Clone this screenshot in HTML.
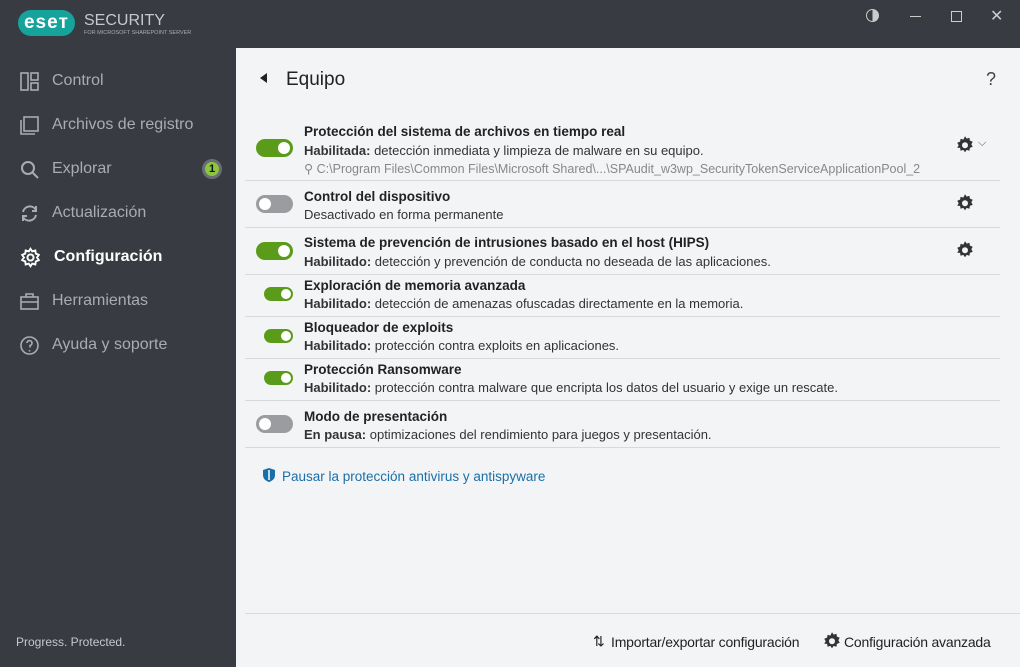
<!DOCTYPE html>
<html><head><meta charset="utf-8"><style>
*{margin:0;padding:0;box-sizing:border-box}
body{width:1020px;height:667px;overflow:hidden;background:#383b41;font-family:"Liberation Sans",sans-serif;position:relative}
.abs{position:absolute}
.side{left:0;top:48px;width:236px;height:619px;background:#383b41}
.nav{position:absolute;left:20px;height:24px;display:flex;align-items:center;color:#a9adb3;font-size:16px}
.nav svg{margin-right:13px}
.main{left:236px;top:48px;width:784px;height:619px;background:#f3f4f6}
.row{position:absolute;left:9px;width:755px;border-bottom:1px solid #d7d9dc}
.t{position:absolute;left:59px;font-size:13.5px;font-weight:bold;color:#222}
.d{position:absolute;left:59px;font-size:13px;color:#333;white-space:nowrap}
.d b{font-weight:bold}
.tg{position:absolute;border-radius:10px}
.tg::after{content:"";position:absolute;background:#fff;border-radius:50%}
.on{background:#5a9c1a}.off{background:#9a9c9f}
.big{left:11px;width:37px;height:18px}
.big::after{width:12px;height:12px;top:3px}
.big.on::after{left:22px}.big.off::after{left:3px}
.sm{left:19px;width:29px;height:14px}
.sm::after{width:10px;height:10px;top:2px;left:17px}
.g{position:absolute;left:710px}
</style></head><body>
<svg width="0" height="0" style="position:absolute"><defs><g id="gear"><path d="M12 1.5l2 2.8 3.3-1 .6 3.4 3.4 1.4-1.7 3 1.7 3-3.4 1.4-.6 3.4-3.3-1-2 2.8-2-2.8-3.3 1-.6-3.4L2.7 15.3l1.7-3-1.7-3 3.4-1.4.6-3.4 3.3 1z" fill="#333"/><circle cx="12" cy="12.3" r="3.6" fill="#f3f4f6"/></g></defs></svg>
<div class="abs" style="left:18px;top:10px;width:57px;height:26px;background:#16a39b;border-radius:13px;color:#fff;font-weight:bold;font-size:19px;line-height:26px;text-align:center;letter-spacing:1px">eseт</div>
<div class="abs" style="left:84px;top:12px;color:#c5c8cc;font-size:16px">SECURITY</div>
<div class="abs" style="left:84px;top:30px;color:#a9adb3;font-size:5.5px">FOR MICROSOFT SHAREPOINT SERVER</div>
<div class="abs" style="left:866px;top:9px;width:13px;height:13px;border:1.5px solid #ccc;border-radius:50%;background:linear-gradient(90deg,transparent 50%,#ccc 50%)"></div>
<div class="abs" style="left:910px;top:16px;width:11px;height:1px;background:#ccc"></div>
<div class="abs" style="left:951px;top:11px;width:11px;height:11px;border:1px solid #ccc"></div>
<div class="abs" style="left:990px;top:6px;color:#ccc;font-size:16px">✕</div>
<div class="abs side">
 <div class="nav" style="top:21px"><svg width="19" height="19" fill="none" stroke="#a9adb3" stroke-width="1.6"><rect x="1" y="1" width="7" height="17"/><rect x="11" y="1" width="7" height="7"/><rect x="11" y="11" width="7" height="7"/></svg>Control</div>
 <div class="nav" style="top:65px"><svg width="19" height="19" fill="none" stroke="#a9adb3" stroke-width="1.6"><rect x="4" y="1" width="14" height="14"/><path d="M1 4v14h14"/></svg>Archivos de registro</div>
 <div class="nav" style="top:109px"><svg width="19" height="19" fill="none" stroke="#a9adb3" stroke-width="2"><circle cx="8" cy="8" r="6"/><path d="M12.5 12.5L18 18"/></svg>Explorar</div>
 <div class="abs" style="left:202px;top:111px;width:20px;height:20px;border-radius:50%;background:#8cc63f;border:3px solid #6a6d72;font-size:11px;font-weight:bold;text-align:center;line-height:14px;color:#111">1</div>
 <div class="nav" style="top:153px"><svg width="19" height="19" fill="none" stroke="#a9adb3" stroke-width="2"><path d="M3 8a7 7 0 0 1 13-2M16 11a7 7 0 0 1-13 2"/><path d="M16 2v5h-4M3 17v-5h4"/></svg>Actualización</div>
 <div class="nav" style="top:197px;color:#fff;font-weight:bold"><svg width="21" height="21" viewBox="0 0 24 24" fill="none" stroke="#fff" stroke-width="2.2"><circle cx="12" cy="12" r="3.5"/><path d="M12 2l2 3 3.5-1 .5 3.5 3.5 1.5-2 3 2 3-3.5 1.5-.5 3.5-3.5-1-2 3-2-3-3.5 1-.5-3.5L2.5 15l2-3-2-3L6 7.5 6.5 4 10 5z"/></svg>Configuración</div>
 <div class="nav" style="top:241px"><svg width="19" height="19" fill="none" stroke="#a9adb3" stroke-width="1.6"><rect x="1" y="5" width="17" height="12"/><path d="M6 5V2h7v3M1 10h17"/></svg>Herramientas</div>
 <div class="nav" style="top:285px"><svg width="19" height="19" fill="none" stroke="#a9adb3" stroke-width="1.6"><circle cx="9.5" cy="9.5" r="8.5"/><path d="M7 7a2.5 2.5 0 1 1 3 2.5v2M9.5 14v1.5"/></svg>Ayuda y soporte</div>
 <div class="abs" style="left:16px;top:587px;color:#c5c8cc;font-size:12px">Progress. Protected.</div>
</div>
<div class="abs main">
 <div class="abs" style="left:24px;top:25px;width:0;height:0;border-top:5px solid transparent;border-bottom:5px solid transparent;border-right:7px solid #222"></div>
 <div class="abs" style="left:50px;top:21px;font-size:19px;color:#222">Equipo</div>
 <div class="abs" style="left:750px;top:21px;font-size:18px;color:#444">?</div>
 <div class="row" style="top:68px;height:65px"><div class="tg big on" style="top:23px"></div>
  <div class="t" style="top:8px">Protección del sistema de archivos en tiempo real</div>
  <div class="d" style="top:27px"><b>Habilitada:</b> detección inmediata y limpieza de malware en su equipo.</div>
  <div class="d" style="top:45px;color:#888;font-size:12.5px">⚲ C:\Program Files\Common Files\Microsoft Shared\...\SPAudit_w3wp_SecurityTokenServiceApplicationPool_2</div>
  <svg class="g" style="top:19px" width="20" height="20" viewBox="0 0 24 24"><use href="#gear"/></svg><div class="abs" style="left:733px;top:21px;font-size:11px;color:#555">⌵</div></div>
 <div class="row" style="top:133px;height:47px">
  <div class="tg big off" style="top:14px"></div>
  <div class="t" style="top:8px">Control del dispositivo</div>
  <div class="d" style="top:26px">Desactivado en forma permanente</div>
  <svg class="g" style="top:12px" width="20" height="20" viewBox="0 0 24 24"><use href="#gear"/></svg></div>
 <div class="row" style="top:180px;height:47px"><div class="tg big on" style="top:14px"></div>
  <div class="t" style="top:7px">Sistema de prevención de intrusiones basado en el host (HIPS)</div>
  <div class="d" style="top:26px"><b>Habilitado:</b> detección y prevención de conducta no deseada de las aplicaciones.</div>
  <svg class="g" style="top:12px" width="20" height="20" viewBox="0 0 24 24"><use href="#gear"/></svg></div>
 <div class="row" style="top:227px;height:42px"><div class="tg sm on" style="top:12px"></div>
  <div class="t" style="top:3px">Exploración de memoria avanzada</div>
  <div class="d" style="top:21px"><b>Habilitado:</b> detección de amenazas ofuscadas directamente en la memoria.</div></div>
 <div class="row" style="top:269px;height:42px"><div class="tg sm on" style="top:12px"></div>
  <div class="t" style="top:3px">Bloqueador de exploits</div>
  <div class="d" style="top:21px"><b>Habilitado:</b> protección contra exploits en aplicaciones.</div></div>
 <div class="row" style="top:311px;height:42px"><div class="tg sm on" style="top:12px"></div>
  <div class="t" style="top:3px">Protección Ransomware</div>
  <div class="d" style="top:21px"><b>Habilitado:</b> protección contra malware que encripta los datos del usuario y exige un rescate.</div></div>
 <div class="row" style="top:353px;height:47px"><div class="tg big off" style="top:14px"></div>
  <div class="t" style="top:8px">Modo de presentación</div>
  <div class="d" style="top:26px"><b>En pausa:</b> optimizaciones del rendimiento para juegos y presentación.</div></div>
 <svg class="abs" style="left:27px;top:420px" width="12" height="14"><path d="M6 0L12 2v5c0 4-3 6-6 7-3-1-6-3-6-7V2z" fill="#1a6fa8"/><path d="M6 2v10" stroke="#fff" stroke-width="1.5"/></svg>
 <div class="abs" style="left:46px;top:421px;font-size:13.5px;color:#1a6fa8">Pausar la protección antivirus y antispyware</div>
 <div class="abs" style="left:9px;top:565px;width:775px;height:1px;background:#d7d9dc"></div>
 <div class="abs" style="left:357px;top:585px;font-size:14px;color:#222">⇅</div>
 <div class="abs" style="left:375px;top:586px;font-size:14px;color:#222;letter-spacing:-0.2px">Importar/exportar configuración</div>
 <svg class="abs" style="left:586px;top:583px" width="20" height="20" viewBox="0 0 24 24"><use href="#gear"/></svg>
 <div class="abs" style="left:608px;top:586px;font-size:14px;color:#222;letter-spacing:-0.2px">Configuración avanzada</div>
</div>
</body></html>
